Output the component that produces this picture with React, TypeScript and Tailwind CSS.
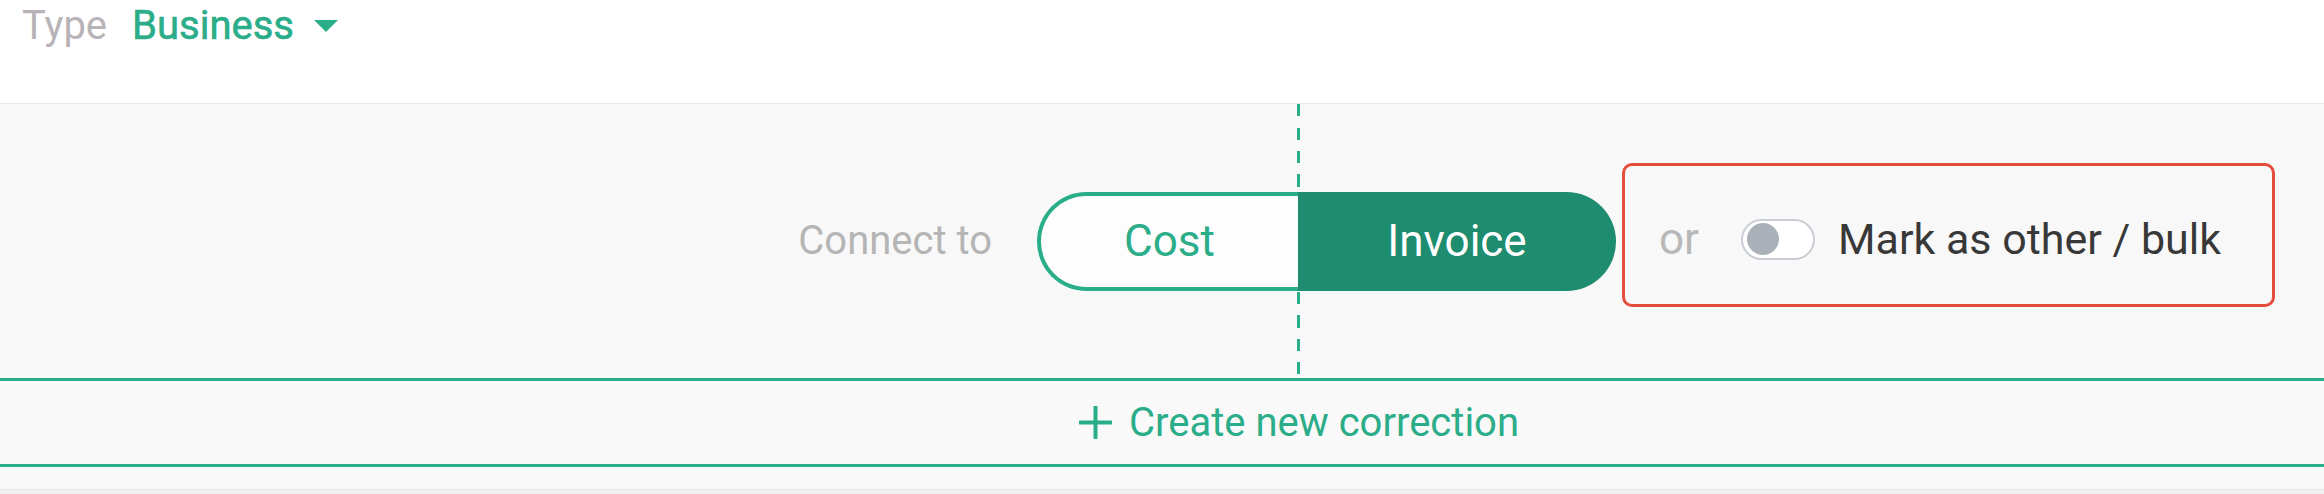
import React from "react";

export default function App() {
  return (
    <div
      className="w-[2324px] h-[494px] overflow-hidden bg-white"
      style={{ fontFamily: "Roboto, 'Liberation Sans', sans-serif" }}
    >
      {/* Header */}
      <div className="h-[104px] border-b border-[#e9e9e9] bg-white pl-[22px] pt-[2px]">
        <div className="flex items-center text-[40px] leading-[48px]">
          <span className="text-[#b8b3b8]">Type</span>
          <span className="ml-[25px] text-[#2aad88] [-webkit-text-stroke:0.6px_#2aad88]">Business</span>
          <svg className="ml-[20px]" width="24" height="12" viewBox="0 0 24 12">
            <path d="M0 0 L24 0 L12 12 Z" fill="#2aad88" />
          </svg>
        </div>
      </div>

      {/* Connect band */}
      <div className="relative h-[277px] bg-[#f8f8f8] border-b-[3px] border-[#2aae8a] flex items-center justify-end pr-[49px]">
        <div className="absolute left-[1297px] top-0 bottom-0 w-[3px] bg-[repeating-linear-gradient(to_bottom,#2aae8a_0px,#2aae8a_12px,transparent_12px,transparent_23.5px)]" />

        <span className="text-[40px] leading-none text-[#b5b5b5] mr-[45px]">Connect to</span>

        <div className="relative z-10 flex h-[99px]">
          <div className="w-[261px] h-full rounded-l-full border-[4px] border-r-0 border-[#2aae8a] bg-[#fdfdfd] flex items-center justify-center">
            <span className="text-[44px] leading-none text-[#2aad88]">Cost</span>
          </div>
          <div className="w-[318px] h-full rounded-r-full bg-[#1e8c6e] flex items-center justify-center">
            <span className="text-[44px] leading-none text-white">Invoice</span>
          </div>
        </div>

        <div className="ml-[6px] mb-[12px] w-[653px] h-[144px] rounded-[10px] border-[3px] border-[#e54d3c] flex items-center pl-[34px] pt-[8px]">
          <span className="text-[44px] leading-none text-[#b8b8b8]">or</span>
          <div className="ml-[42px] w-[74px] h-[41px] rounded-full border-2 border-[#c9ced4] bg-white flex items-center pl-[4px]">
            <div className="w-[32px] h-[32px] rounded-full bg-[#aab1b9]" />
          </div>
          <span className="ml-[23px] text-[43px] leading-none text-[#383838]">Mark as other / bulk</span>
        </div>
      </div>

      {/* Create new correction */}
      <div className="h-[86px] bg-[#f9f9f9] border-b-[3px] border-[#2aae8a] flex items-center justify-center pl-[274px]">
        <svg width="33" height="33" viewBox="0 0 33 33">
          <path d="M16.5 1 V32 M1 16.5 H32" stroke="#2aae8a" strokeWidth="4" strokeLinecap="round" />
        </svg>
        <span className="ml-[17px] text-[40px] leading-none text-[#2aad88]">Create new correction</span>
      </div>

      {/* Footer */}
      <div className="h-[23px] bg-[#f9f9f9] border-b border-[#e4e4e4]" />
      <div className="h-[4px] bg-[#f1f1f1]" />
    </div>
  );
}
